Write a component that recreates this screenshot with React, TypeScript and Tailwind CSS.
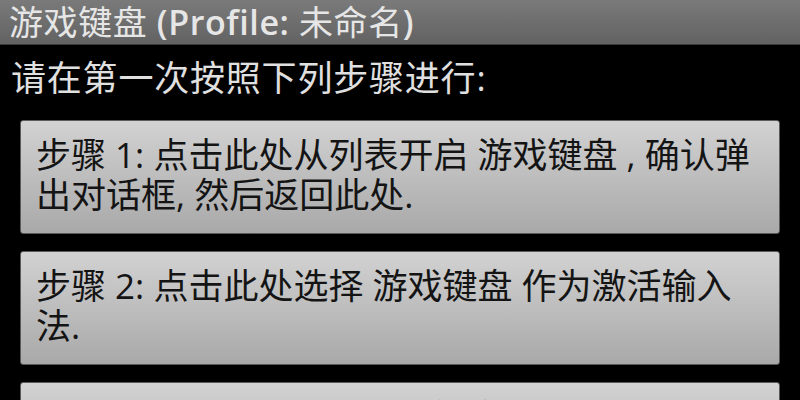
const steps = [
  "步骤 1: 点击此处从列表开启 游戏键盘 , 确认弹出对话框, 然后返回此处.",
  "步骤 2: 点击此处选择 游戏键盘 作为激活输入法.",
  "步骤 3: 点击此处配置游戏键盘.",
];

export default function App() {
  return (
    <div className="w-[800px] h-[400px] overflow-hidden bg-black font-['Open_Sans','Noto_Sans_CJK_SC',sans-serif]">
      {/* Title bar */}
      <div className="h-[45px] bg-gradient-to-b from-[#7a7a7a] to-[#626262] border-b border-[#3a3a3a] flex items-center px-[9px]">
        <span className="text-[34px] leading-none tracking-[0.6px] text-[#e6e6e6] whitespace-nowrap">
          游戏键盘 <span className="font-semibold">(Profile:</span> 未命名<span className="font-semibold">)</span>
        </span>
      </div>

      <div className="px-5">
        <p className="mt-[13px] ml-[-9px] text-[35px] leading-[40px] tracking-[0.8px] text-[#e0e0e0] whitespace-nowrap">
          请在第一次按照下列步骤进行:
        </p>

        <div className="mt-[22px] flex flex-col gap-[17px]">
          {steps.map((s, i) => (
            <div
              key={i}
              role="button"
              className="h-[114px] shrink-0 rounded-[3px] border border-[#5a5a5a] bg-gradient-to-b from-[#d2d2d2] to-[#a9a9a9] pl-[15px] pr-4 pt-[14px] text-[35px] leading-[40px] text-[#141414]"
            >
              {s}
            </div>
          ))}
        </div>
      </div>
    </div>
  );
}
